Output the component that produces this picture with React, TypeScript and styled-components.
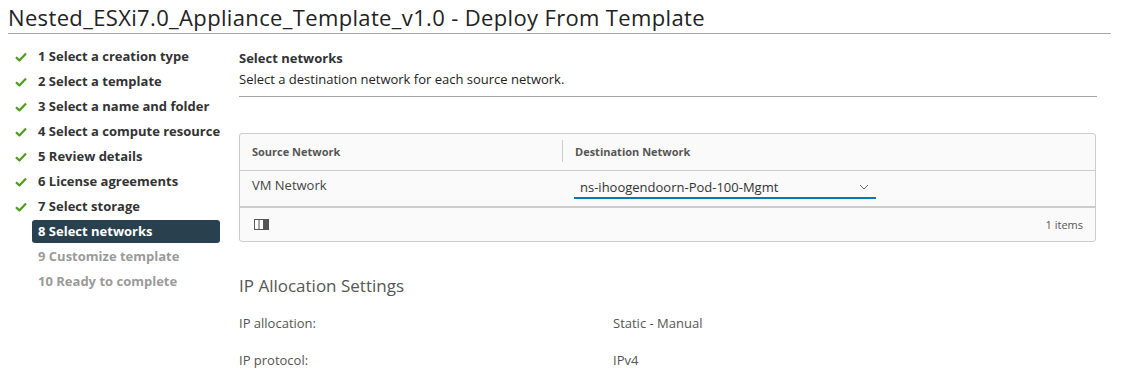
import styled, { createGlobalStyle } from 'styled-components';

const steps = [
  { n: 1, label: 'Select a creation type', state: 'done' },
  { n: 2, label: 'Select a template', state: 'done' },
  { n: 3, label: 'Select a name and folder', state: 'done' },
  { n: 4, label: 'Select a compute resource', state: 'done' },
  { n: 5, label: 'Review details', state: 'done' },
  { n: 6, label: 'License agreements', state: 'done' },
  { n: 7, label: 'Select storage', state: 'done' },
  { n: 8, label: 'Select networks', state: 'active' },
  { n: 9, label: 'Customize template', state: 'todo' },
  { n: 10, label: 'Ready to complete', state: 'todo' },
] as const;

type StepState = 'done' | 'active' | 'todo';

const GlobalStyle = createGlobalStyle`
  body {
    margin: 0;
    background: #ffffff;
    font-family: 'Open Sans', 'Noto Sans', sans-serif;
    color: #313131;
  }
`;

export default function App() {
  return (
    <>
      <GlobalStyle />
      <Page>
        <Title>Nested_ESXi7.0_Appliance_Template_v1.0 - Deploy From Template</Title>
        <Body>
          <StepList>
            {steps.map((s) => (
              <Step key={s.n}>
                <CheckSlot>{s.state === 'done' && <CheckIcon />}</CheckSlot>
                <StepLabel $state={s.state}>
                  {s.n} {s.label}
                </StepLabel>
              </Step>
            ))}
          </StepList>

          <Content>
            <SectionTitle>Select networks</SectionTitle>
            <SectionDesc>Select a destination network for each source network.</SectionDesc>

            {/* データグリッド */}
            <Grid>
              <GridHeader>
                <HeaderCell>Source Network</HeaderCell>
                <HeaderCell $divider>Destination Network</HeaderCell>
              </GridHeader>
              <GridRow>
                <Cell>VM Network</Cell>
                <Cell>
                  <Select>
                    <span>ns-ihoogendoorn-Pod-100-Mgmt</span>
                    <Chevron />
                  </Select>
                </Cell>
              </GridRow>
              <GridFooter>
                <ColumnsIcon />
                <ItemCount>1 items</ItemCount>
              </GridFooter>
            </Grid>

            <SubHeading>IP Allocation Settings</SubHeading>
            <PropList>
              <PropKey>IP allocation:</PropKey>
              <PropValue>Static - Manual</PropValue>
              <PropKey>IP protocol:</PropKey>
              <PropValue>IPv4</PropValue>
            </PropList>
          </Content>
        </Body>
      </Page>
    </>
  );
}

const CheckIcon = () => (
  <svg width="12" height="10" viewBox="0 0 12 10">
    <path d="M1 5.2 L4.4 8.4 L11 1.4" fill="none" stroke="#4f9d1d" strokeWidth="2.2" strokeLinejoin="round" />
  </svg>
);

const Chevron = () => (
  <svg width="10" height="6" viewBox="0 0 10 6">
    <path d="M1 1 L5 5 L9 1" fill="none" stroke="#666" strokeWidth="1" />
  </svg>
);

const ColumnsIcon = () => (
  <svg width="15" height="11" viewBox="0 0 15 11">
    <rect x="0.5" y="0.5" width="14" height="10" fill="#fff" stroke="#555" />
    <line x1="5" y1="0.5" x2="5" y2="10.5" stroke="#555" />
    <rect x="9" y="0.5" width="5.5" height="10" fill="#555" />
  </svg>
);

const Page = styled.div`
  padding: 3px 14px 0 8px;
`;

const Title = styled.h1`
  margin: 0;
  font-size: 22px;
  font-weight: 400;
  letter-spacing: 0.35px;
  line-height: 29px;
  color: #222;
  padding-bottom: 1px;
  border-bottom: 1px solid #a6a6a6;
`;

const Body = styled.div`
  display: grid;
  grid-template-columns: 231px 1fr;
  padding-top: 10px;
`;

const StepList = styled.ul`
  list-style: none;
  margin: 0;
  padding: 0;
  display: flex;
  flex-direction: column;
`;

const Step = styled.li`
  display: flex;
  align-items: center;
  height: 25px;
  margin-right: 19px;
`;

const CheckSlot = styled.span`
  width: 23px;
  flex-shrink: 0;
  display: flex;
  justify-content: center;
  padding-left: 1px;
`;

const StepLabel = styled.span<{ $state: StepState }>`
  flex: 1;
  white-space: nowrap;
  font-size: 13px;
  font-weight: 700;
  line-height: 23px;
  border-radius: 3px;
  padding-left: 6px;
  color: ${(p) => (p.$state === 'todo' ? '#9a9a9a' : p.$state === 'active' ? '#ffffff' : '#333')};
  background: ${(p) => (p.$state === 'active' ? '#29414e' : 'transparent')};
`;

const Content = styled.div`
  display: flex;
  flex-direction: column;
  padding-top: 4px;
`;

const SectionTitle = styled.div`
  font-size: 13px;
  font-weight: 700;
  line-height: 20px;
  color: #333;
`;

const SectionDesc = styled.div`
  font-size: 13px;
  line-height: 22px;
  color: #222;
  padding-bottom: 6px;
  margin-right: 14px;
  border-bottom: 1px solid #a6a6a6;
`;

const Grid = styled.div`
  margin-top: 36px;
  margin-right: 15px;
  border: 1px solid #ccc;
  border-radius: 3px;
  background: #fafafa;
`;

const GridHeader = styled.div`
  display: grid;
  grid-template-columns: 322px 1fr;
  height: 36px;
  border-bottom: 1px solid #ccc;
`;

const HeaderCell = styled.div<{ $divider?: boolean }>`
  display: flex;
  align-items: center;
  margin: 6px 0 8px;
  padding-left: 12px;
  font-size: 11px;
  font-weight: 700;
  color: #565656;
  border-left: ${(p) => (p.$divider ? '1px solid #ccc' : 'none')};
`;

const GridRow = styled.div`
  display: grid;
  grid-template-columns: 322px 1fr;
  height: 35px;
  border-bottom: 2px solid #ccc;
`;

const Cell = styled.div`
  display: flex;
  align-items: flex-start;
  padding: 5px 0 0 12px;
  font-size: 13px;
  line-height: 18px;
  color: #444;
`;

const Select = styled.div`
  width: 302px;
  display: flex;
  align-items: center;
  justify-content: space-between;
  padding: 0 7px 0 6px;
  box-sizing: border-box;
  height: 23px;
  font-size: 13px;
  color: #333;
  border-bottom: 2px solid #0079b8;
`;

const GridFooter = styled.div`
  display: flex;
  align-items: center;
  justify-content: space-between;
  height: 33px;
  padding: 0 12px 0 14px;
`;

const ItemCount = styled.span`
  font-size: 11px;
  color: #565656;
`;

const SubHeading = styled.h2`
  margin: 32px 0 0;
  font-size: 17px;
  font-weight: 400;
  line-height: 24px;
  color: #565656;
`;

const PropList = styled.div`
  display: grid;
  grid-template-columns: 374px 1fr;
  row-gap: 17px;
  margin-top: 15px;
  font-size: 13px;
  line-height: 20px;
  color: #555;
`;

const PropKey = styled.div``;

const PropValue = styled.div``;
